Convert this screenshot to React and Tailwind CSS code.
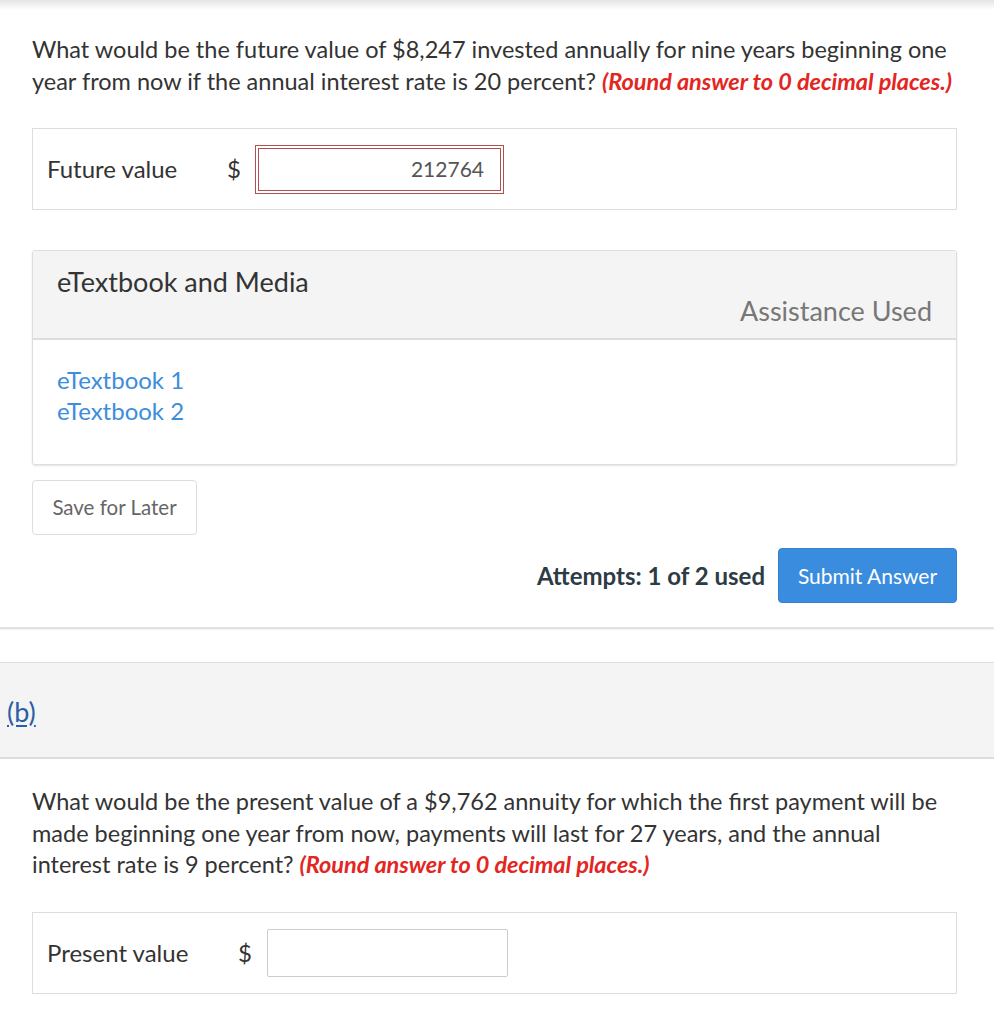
import React from "react";

const Question = ({ children }) => (
  <p className="text-[23.5px] leading-[32px] text-[#333] whitespace-nowrap">{children}</p>
);

const Round = () => (
  <span className="font-bold italic text-[#e3261f] tracking-[-0.05px]">
    (Round answer to 0 decimal places.)
  </span>
);

const App = () => {
  return (
    <div className="bg-white min-h-screen w-[994px]" style={{ fontFamily: "Lato, 'Open Sans', sans-serif" }}>
      {/* top shadow */}
      <div className="h-[10px] bg-gradient-to-b from-[#e4e4e4] to-white" />

      {/* part (a) */}
      <div className="ml-[32px] w-[925px]">
        <div className="mt-[23px]">
          <Question>
            What would be the future value of $8,247 invested annually for nine years beginning one
            <br />
            year from now if the annual interest rate is 20 percent? <Round />
          </Question>
        </div>

        <div className="mt-[31px] h-[82px] border border-[#dddddd] flex items-center pl-[14px]">
          <span className="text-[24px] text-[#333] w-[180px]">Future value</span>
          <span className="text-[24px] text-[#333] w-[28px]">$</span>
          <div className="w-[249px] h-[49px] border-[4px] border-double border-[#b0504f] flex items-center justify-end pr-[16px] text-[21px] text-[#555]">
            212764
          </div>
        </div>

        {/* eTextbook panel */}
        <div className="mt-[40px] border border-[#dddddd] rounded-[3px] shadow-[0_1px_2px_rgba(0,0,0,0.12)]">
          <div className="bg-[#f4f4f4] border-b-2 border-[#dddddd] pt-[16px] pb-[13px] px-[24px] rounded-t-[3px]">
            <div className="text-[27px] leading-[29px] text-[#333]">eTextbook and Media</div>
            <div className="text-[27px] leading-[29px] text-[#777] text-right">Assistance Used</div>
          </div>
          <div className="pt-[24px] pb-[38px] px-[24px] flex flex-col items-start text-[24px] leading-[31px] text-[#3c8ddc]">
            <a>eTextbook 1</a>
            <a>eTextbook 2</a>
          </div>
        </div>

        <button className="mt-[15px] w-[165px] h-[55px] border border-[#dddddd] rounded-[4px] bg-white text-[20.5px] text-[#666]">
          Save for Later
        </button>

        <div className="mt-[13px] flex items-center justify-end gap-[13px]">
          <span className="text-[24px] font-bold text-[#2d3b45]">Attempts: 1 of 2 used</span>
          <button className="w-[179px] h-[55px] rounded-[4px] bg-[#3a8dde] border border-[#3583cf] text-white text-[21px]">
            Submit Answer
          </button>
        </div>
      </div>

      <div className="mt-[24px] h-[2px] bg-[#e2e2e2] shadow-[0_1px_1px_rgba(0,0,0,0.05)]" />

      {/* part (b) header */}
      <div className="mt-[33px] h-[97px] bg-[#f4f4f4] border-t border-[#e0e0e0] border-b-2 border-b-[#dcdcdc] flex items-center pl-[7px]">
        <a className="text-[27px] text-[#2b5fa5] underline underline-offset-[3px] mt-[4px]">(b)</a>
      </div>

      <div className="ml-[32px] w-[925px]">
        <div className="mt-[27px]">
          <p className="text-[23.5px] leading-[31.5px] text-[#333] whitespace-nowrap">
            What would be the present value of a $9,762 annuity for which the first payment will be
            <br />
            made beginning one year from now, payments will last for 27 years, and the annual
            <br />
            interest rate is 9 percent? <Round />
          </p>
        </div>

        <div className="mt-[31px] h-[82px] border border-[#dddddd] flex items-center pl-[14px]">
          <span className="text-[24px] text-[#333] w-[191px]">Present value</span>
          <span className="text-[24px] text-[#333] w-[29px]">$</span>
          <div className="w-[241px] h-[48px] border border-[#cccccc] rounded-[2px] bg-white" />
        </div>
      </div>
    </div>
  );
};

export default App;
